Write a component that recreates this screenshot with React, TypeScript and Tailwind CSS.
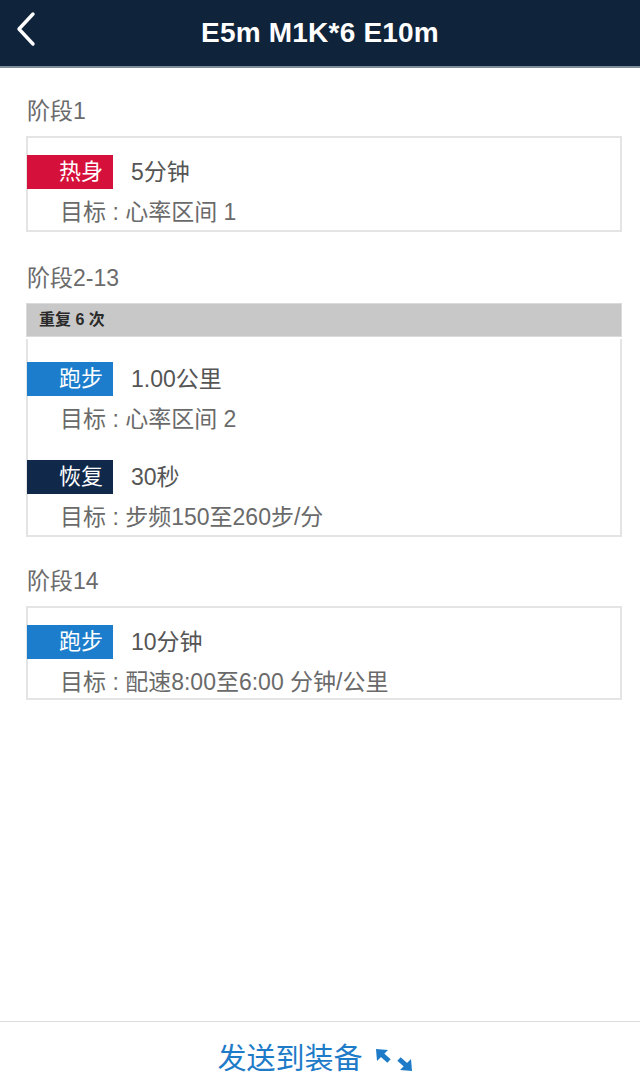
import React from "react";

const FONT = { fontFamily: '"Liberation Sans", "Noto Sans CJK SC", sans-serif' };

function Tag({ label, color }: { label: string; color: string }) {
  return (
    <div
      className={`-ml-[1px] w-[86px] h-[34px] flex items-center justify-end pr-[10px] text-white text-[22px] leading-none ${color}`}
    >
      {label}
    </div>
  );
}

function Step({
  label,
  color,
  value,
  target,
}: {
  label: string;
  color: string;
  value: string;
  target: string;
}) {
  return (
    <div>
      <div className="flex items-center">
        <Tag label={label} color={color} />
        <span className="ml-[18px] text-[23px] text-[#555555] leading-none">{value}</span>
      </div>
      <div className="mt-[8px] pl-[32px] h-[30px] leading-[30px] text-[23px] text-[#6a6a6a]">{target}</div>
    </div>
  );
}

function Label({ children, mt }: { children: React.ReactNode; mt: string }) {
  return (
    <div className={`${mt} mb-[10px] h-[30px] leading-[30px] text-[23px] text-[#6b6b6b] pl-[1px]`}>
      {children}
    </div>
  );
}

export default function App() {
  return (
    <div className="w-[640px] h-[1079px] flex flex-col bg-white" style={FONT}>
      <header className="h-[68px] bg-[#0f243b] border-b-2 border-[#7f8c99] flex items-center relative shrink-0">
        <svg className="absolute left-[15px] top-[11px]" width="22" height="36" viewBox="0 0 22 36">
          <path d="M18 3 L4 18 L18 33" stroke="white" strokeWidth="3.4" fill="none" strokeLinecap="round" strokeLinejoin="round" />
        </svg>
        <div className="w-full text-center text-white text-[28px] font-bold tracking-[0.2px]">E5m M1K*6 E10m</div>
      </header>

      <main className="flex-1 pl-[26px] pr-[18px]">
        <Label mt="mt-[28px]">阶段1</Label>
        <div className="border-2 border-[#e4e4e4] pt-[17px] pb-[3px]">
          <Step label="热身" color="bg-[#d5113b]" value="5分钟" target="目标 : 心率区间 1" />
        </div>

        <Label mt="mt-[31px]">阶段2-13</Label>
        <div className="h-[34px] bg-[#c8c8c8] border border-[#dadada] flex items-center pl-[12px] text-[16px] font-bold text-[#2a2a2a]">
          重复 6 次
        </div>
        <div className="mt-[2px] border-2 border-t-0 border-[#e4e4e4] pt-[23px] pb-[3px]">
          <Step label="跑步" color="bg-[#1b7dcb]" value="1.00公里" target="目标 : 心率区间 2" />
          <div className="h-[26px]" />
          <Step label="恢复" color="bg-[#10294a]" value="30秒" target="目标 : 步频150至260步/分" />
        </div>

        <Label mt="mt-[29px]">阶段14</Label>
        <div className="border-2 border-[#e4e4e4] pt-[17px] pb-[1px]">
          <Step label="跑步" color="bg-[#1b7dcb]" value="10分钟" target="目标 : 配速8:00至6:00 分钟/公里" />
        </div>
      </main>

      <footer className="h-[58px] border-t border-[#dddddd] flex items-start justify-center pt-[20px] pr-[9px] shrink-0">
        <div className="flex items-center h-[34px]">
          <span className="text-[29px] leading-[34px] text-[#1d7bc8]">发送到装备</span>
          <svg className="ml-[11px] mt-[2px]" width="40" height="26" viewBox="0 0 40 26">
            <path d="M2 2 L14 3 L3 14 Z" fill="#1d7bc8" />
            <path d="M6 6 L15 14" stroke="#1d7bc8" strokeWidth="5" />
            <path d="M38 24 L26 23 L37 12 Z" fill="#1d7bc8" />
            <path d="M34 20 L25 12" stroke="#1d7bc8" strokeWidth="5" />
          </svg>
        </div>
      </footer>
    </div>
  );
}
